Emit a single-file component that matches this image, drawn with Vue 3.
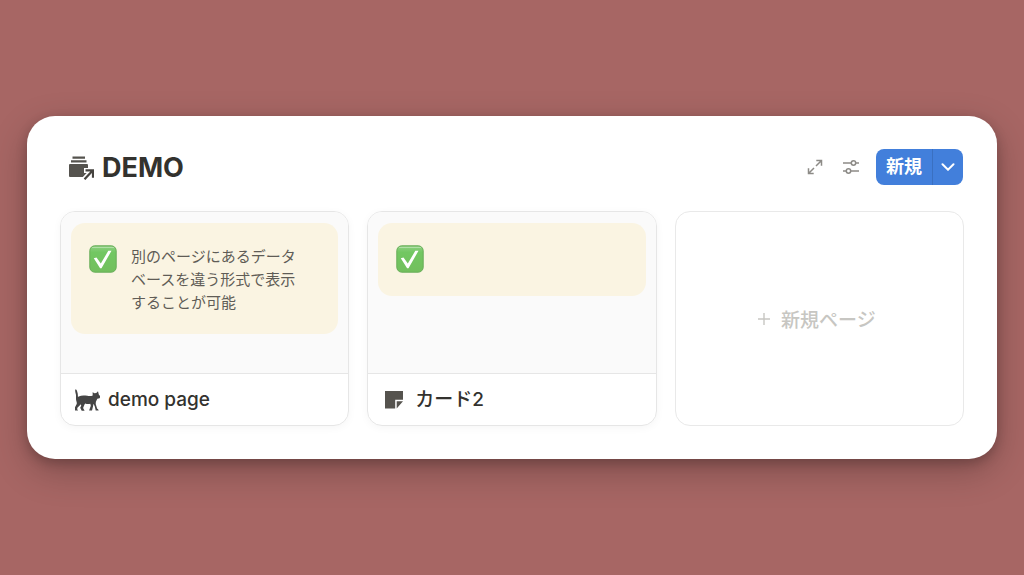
<script setup>
const cards = [
  { title: 'demo page', icon: 'cat', note: '別のページにあるデータベースを違う形式で表示することが可能' },
  { title: 'カード2', icon: 'note', note: '' },
]
</script>

<template>
  <main class="page">
    <section class="panel">
      <header class="bar">
        <svg class="db-icon" viewBox="0 0 26 26" aria-hidden="true">
          <path fill="#55534e" d="M4.500 2.500h12.500v2.200H4.500zM3 6.200h15.500v2.200H3zM2 10h17a1 1 0 0 1 1 1v12H2a1 1 0 0 1-1-1V11a1 1 0 0 1 1-1z" />
          <path fill="none" stroke="#fff" stroke-width="5" d="M15.500 26l8-8.500M16 16.500h9v8" />
          <path fill="none" stroke="#45433f" stroke-width="2.200" d="M16.500 25.300l8-8.500M17.500 16.300H25v7.500" />
        </svg>
        <h1>DEMO</h1>
        <div class="tools">
          <button class="tool" type="button" aria-label="Expand">
            <svg viewBox="0 0 16 16"><path d="M9 7L14.500 1.500M9.300 1.500h5.200v5.200M7 9L1.500 14.500M1.500 9.300v5.200h5.200" /></svg>
          </button>
          <button class="tool wide" type="button" aria-label="Settings">
            <svg viewBox="0 0 18 16"><path d="M1 4h8.200M13.800 4H17M1 12h3.200M8.800 12H17" /><circle cx="11.500" cy="4" r="2.200" /><circle cx="6.500" cy="12" r="2.200" /></svg>
          </button>
          <div class="split">
            <button class="new" type="button">新規</button>
            <button class="more" type="button" aria-label="More">
              <svg viewBox="0 0 14 8"><path d="M1.500 1.200L7 6.700l5.500-5.500" /></svg>
            </button>
          </div>
        </div>
      </header>

      <div class="grid">
        <article v-for="card in cards" :key="card.title" class="card">
          <div class="cover">
            <div class="callout">
              <svg class="check" viewBox="0 0 28 28" aria-hidden="true">
                <defs>
                  <linearGradient :id="'g-' + card.icon" x1="0" y1="0" x2="0" y2="1">
                    <stop offset="0" stop-color="#8fd083" />
                    <stop offset=".25" stop-color="#72c762" />
                    <stop offset="1" stop-color="#72bf5d" />
                  </linearGradient>
                </defs>
                <rect x=".8" y=".8" width="26.400" height="26.400" rx="5" :fill="'url(#g-' + card.icon + ')'" stroke="#68ad59" />
                <path d="M3.500 2.500h21" stroke="#b0dfa6" stroke-linecap="round" />
                <path fill="#fff" d="M4.800 13.300l2.700-.7 4.300 6L19.300 5.800h3.200L12.500 23.300h-1.400z" />
              </svg>
              <p v-if="card.note">{{ card.note }}</p>
            </div>
          </div>
          <footer class="caption">
            <svg v-if="card.icon === 'cat'" class="glyph" viewBox="0 0 26 24" aria-hidden="true">
              <path fill="#454545" d="M1.600 1.300C.6 2.400 1.500 4.500 1.900 6.500c.3 1.700 0 3 .1 4.700.1 1.900 1.100 2.800.7 4.700L1 19.300v3.200h3.100l-.9-1.300.2-1.400 3.500-3.600.3 1.500-1 2.100 1.500 3h2.900l-1.500-2.900 1.300-3.200.7-1.300c1.800.6 3.600.7 5.200.3l.5 2.100-1.700 4.700h2.900l1-3.900.5-2.800 1.300 2.700.9 4h3l-.6-1.300-.9-.4-1.500-4.800.2-2.300 1.400-3 2.300-.5.9-1.500-1.700-2.300-.8-3.100-1.700 1.700-1.800.2-1.900-1 .1 3.200c-1.200.7-3.200.7-5.400.4-2.800-.4-6-.6-8.600.6L3.900 9c.2-2-.2-4-.8-5.700-.3-1-.7-1.900-1.500-2z" />
            </svg>
            <svg v-else class="glyph" viewBox="0 0 26 24" aria-hidden="true">
              <path fill="#55534e" d="M4 3h18v8.800h-7.800V20.500H4zM15.700 13.300H22l-6.300 7.200z" />
            </svg>
            <h2>{{ card.title }}</h2>
          </footer>
        </article>
        <button class="card add" type="button">
          <svg viewBox="0 0 14 14" aria-hidden="true"><path d="M7 1v12M1 7h12" /></svg>
          <span>新規ページ</span>
        </button>
      </div>
    </section>
  </main>
</template>

<style>
body {
  margin: 0;
  background: #a76664;
}
</style>

<style scoped>
.page {
  box-sizing: border-box;
  min-height: 100vh;
  display: flex;
  flex-direction: column;
  justify-content: center;
  padding: 24px 27px;
  font-family: Inter, "Noto Sans CJK JP", sans-serif;
  color: #33322e;
}
.panel {
  background: #fff;
  border-radius: 28px;
  padding: 33px;
  box-shadow: 0 12px 36px rgba(0, 0, 0, 0.24), 0 4px 12px rgba(0, 0, 0, 0.2);
}
.bar {
  display: flex;
  align-items: center;
  height: 36px;
  padding: 0 1px 0 8px;
}
.db-icon {
  width: 26px;
  height: 26px;
}
h1 {
  margin: 0 0 0 8px;
  padding-top: 2px;
  font-size: 27px;
  line-height: 34px;
  font-weight: 700;
}
.tools {
  margin-left: auto;
  display: flex;
  align-items: center;
}
button {
  border: 0;
  padding: 0;
  background: none;
  font-family: inherit;
  cursor: pointer;
}
svg {
  display: block;
  flex: none;
}
.tool svg {
  width: 16px;
  height: 16px;
  fill: none;
  stroke: #8d8b87;
  stroke-width: 1.5;
}
.tool.wide {
  margin: 0 16px 0 19px;
}
.tool.wide svg {
  width: 18px;
}
.split {
  display: flex;
  height: 36px;
  border-radius: 8px;
  overflow: hidden;
  background: #427fdb;
}
.new {
  width: 56px;
  color: #fff;
  font-size: 18px;
  font-weight: 600;
  line-height: 36px;
}
.more {
  display: grid;
  place-items: center;
  width: 31px;
  border-left: 1px solid #3a70c1;
}
.more svg {
  width: 14px;
  height: 8px;
  fill: none;
  stroke: #fff;
  stroke-width: 2;
  stroke-linecap: round;
}
.grid {
  display: grid;
  grid-template-columns: repeat(3, 1fr);
  gap: 18px;
  margin-top: 26px;
}
.card {
  display: flex;
  flex-direction: column;
  min-height: 215px;
  box-sizing: border-box;
  border: 1px solid #e6e6e6;
  border-radius: 15px;
  overflow: hidden;
  box-shadow: 0 2px 8px rgba(0, 0, 0, 0.04);
}
.cover {
  flex: 1;
  padding: 11px 10px;
  background: #fafafa;
  border-bottom: 1px solid #e6e6e6;
}
.callout {
  box-sizing: border-box;
  display: flex;
  align-items: flex-start;
  gap: 14px;
  min-height: 73px;
  padding: 22px 30px 20px 18px;
  border-radius: 14px;
  background: #faf4e2;
}
.check {
  width: 28px;
  height: 28px;
}
.callout p {
  margin: 0;
  font-size: 15px;
  line-height: 23px;
  color: #5f5c56;
}
.caption {
  display: flex;
  align-items: center;
  gap: 8px;
  height: 51px;
  padding: 0 13px;
}
.glyph {
  width: 26px;
  height: 24px;
}
h2 {
  margin: 0;
  font-size: 19px;
  line-height: 27px;
  font-weight: 500;
}
.add {
  flex-direction: row;
  align-items: center;
  justify-content: center;
  gap: 10px;
  padding-right: 6px;
  border: 1px solid #e9e9e9;
  box-shadow: none;
  color: #c7c6c2;
  font-size: 19px;
  font-weight: 500;
}
.add svg {
  width: 14px;
  height: 14px;
  fill: none;
  stroke: #c7c6c2;
  stroke-width: 1.4;
}
</style>
